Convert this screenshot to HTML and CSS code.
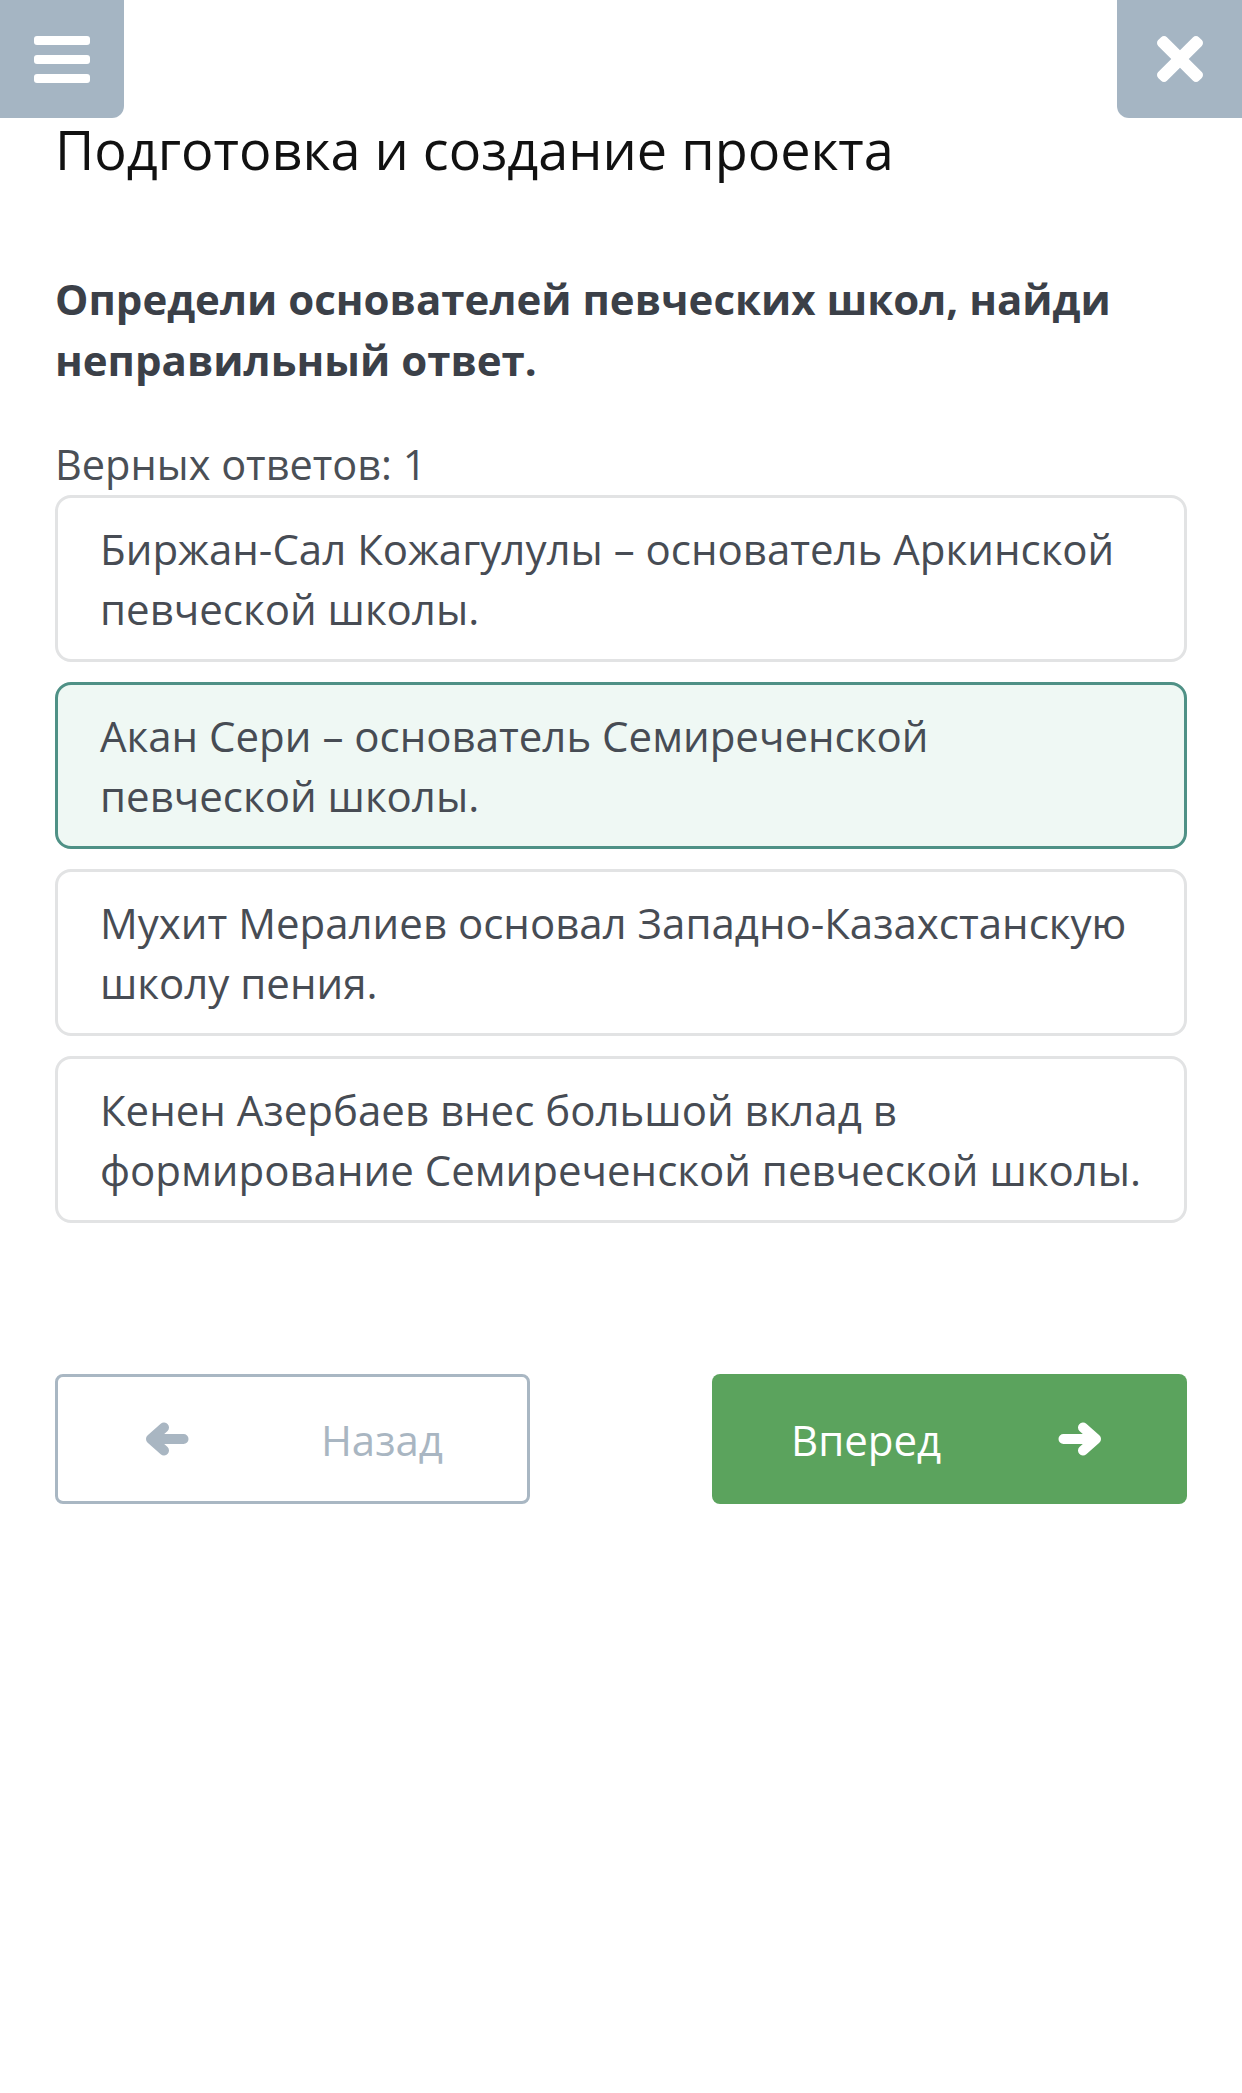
FILE: index.html
```html
<!DOCTYPE html>
<html lang="ru">
<head>
<meta charset="utf-8">
<title>Подготовка и создание проекта</title>
<link rel="stylesheet" href="styles.css">
</head>
<body>
<header class="topbar">
  <button class="nav-btn nav-menu" aria-label="Меню">
    <span class="bar"></span><span class="bar"></span><span class="bar"></span>
  </button>
  <button class="nav-btn nav-close" aria-label="Закрыть">
    <svg class="close-icon" viewBox="0 80 352 352"><path fill="#fff" d="M242.72 256l100.07-100.07c12.28-12.28 12.28-32.19 0-44.48l-22.24-22.24c-12.28-12.28-32.19-12.28-44.48 0L176 189.28 75.93 89.21c-12.28-12.28-32.19-12.28-44.48 0L9.21 111.45c-12.28 12.28-12.28 32.19 0 44.48L109.28 256 9.21 356.07c-12.28 12.28-12.28 32.19 0 44.48l22.24 22.24c12.28 12.28 32.2 12.28 44.48 0L176 322.72l100.07 100.07c12.28 12.28 32.2 12.28 44.48 0l22.24-22.240c12.28-12.28 12.28-32.19 0-44.48L242.72 256z"/></svg>
  </button>
</header>
<main class="content">
  <h1 class="title">Подготовка и создание проекта</h1>
  <p class="question">Определи основателей певческих школ, найди неправильный ответ.</p>
  <p class="counter">Верных ответов: 1</p>
  <div class="options">
    <div class="option">Биржан-Сал Кожагулулы – основатель Аркинской певческой школы.</div>
    <div class="option selected">Акан Сери – основатель Семиреченской певческой школы.</div>
    <div class="option">Мухит Мералиев основал Западно-Казахстанскую школу пения.</div>
    <div class="option">Кенен Азербаев внес большой вклад в формирование Семиреченской певческой школы.</div>
  </div>
  <div class="actions">
    <button class="btn btn-back">
      <svg class="arrow" viewBox="0 0 46 36"><path d="M20 6.5 L7 18 L20 29.5 M7 18 H39.5"/></svg>
      <span>Назад</span>
    </button>
    <button class="btn btn-next">
      <span>Вперед</span>
      <svg class="arrow" viewBox="0 0 46 36"><path d="M26 6.5 L39 18 L26 29.5 M39 18 H6.5"/></svg>
    </button>
  </div>
</main>
</body>
</html>
```

FILE: styles.css
```css
* { box-sizing: border-box; }
html, body { margin: 0; padding: 0; background: #fff; }
body {
  font-family: "Open Sans", "Noto Sans", sans-serif;
  width: 1242px;
  min-height: 2093px;
}
.topbar {
  display: flex;
  justify-content: space-between;
  height: 118px;
}
.nav-btn {
  border: 0;
  padding: 0;
  margin: 0;
  background: #a5b5c3;
  height: 118px;
  display: flex;
  align-items: center;
  justify-content: center;
  cursor: pointer;
}
.nav-menu {
  width: 124px;
  border-radius: 0 0 12px 0;
  flex-direction: column;
  gap: 10px;
}
.bar {
  display: block;
  width: 56px;
  height: 9px;
  background: #fff;
  border-radius: 3px;
}
.nav-close {
  width: 125px;
  border-radius: 0 0 0 12px;
}
.close-icon { width: 46px; height: 46px; }
.content {
  padding: 0 55px;
}
.title {
  margin: 0;
  font-size: 54px;
  line-height: 62px;
  font-weight: 400;
  color: #111;
}
.question {
  margin: 88px 0 0;
  font-size: 42px;
  line-height: 61px;
  font-weight: 700;
  color: #3b4048;
}
.counter {
  margin: 49px 0 0;
  font-size: 41.5px;
  line-height: 50px;
  color: #4a4f56;
}
.options {
  margin-top: 6px;
  display: flex;
  flex-direction: column;
  gap: 20px;
}
.option {
  border: 3px solid #e2e3e4;
  border-radius: 16px;
  padding: 21px 30px 20px 42px;
  font-size: 42px;
  line-height: 60px;
  color: #474c54;
  background: #fff;
}
.option.selected {
  border-color: #4f9186;
  background: #eff8f4;
}
.actions {
  margin-top: 151px;
  display: flex;
  justify-content: space-between;
}
.btn {
  width: 475px;
  height: 130px;
  border-radius: 8px;
  display: flex;
  align-items: center;
  justify-content: space-between;
  font-family: inherit;
  font-size: 42px;
  cursor: pointer;
}
.btn-back {
  background: #fff;
  border: 3px solid #a9b7c3;
  color: #a9b6c2;
  padding: 0 84px 0 86px;
}
.btn-back .arrow path { stroke: #a9b6c2; }
.btn-next {
  background: #5ba35d;
  border: 0;
  color: #fff;
  padding: 0 84px 0 79px;
}
.btn-next .arrow path { stroke: #fff; }
.arrow { width: 46px; height: 36px; }
.arrow path {
  fill: none;
  stroke-width: 10;
  stroke-linecap: round;
  stroke-linejoin: round;
}
```
